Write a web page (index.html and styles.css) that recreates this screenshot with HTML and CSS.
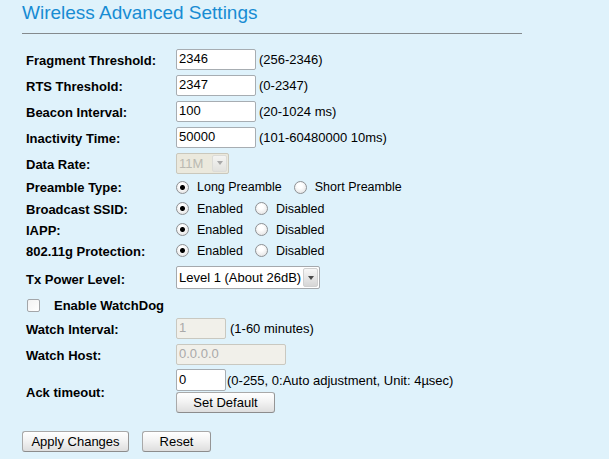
FILE: index.html
```html
<!DOCTYPE html>
<html>
<head>
<meta charset="utf-8">
<title>Wireless Advanced Settings</title>
<link rel="stylesheet" href="styles.css">
</head>
<body>
<div class="page">
  <h1 class="title">Wireless Advanced Settings</h1>
  <div class="rule"></div>
  <div class="form">
    <div class="row h26"><span class="lbl">Fragment Threshold:</span><span class="ctl"><input class="txt w80" type="text" value="2346"><span class="hint">(256-2346)</span></span></div>
    <div class="row h26"><span class="lbl">RTS Threshold:</span><span class="ctl"><input class="txt w80" type="text" value="2347"><span class="hint">(0-2347)</span></span></div>
    <div class="row h26"><span class="lbl">Beacon Interval:</span><span class="ctl"><input class="txt w80" type="text" value="100"><span class="hint">(20-1024 ms)</span></span></div>
    <div class="row h26"><span class="lbl">Inactivity Time:</span><span class="ctl"><input class="txt w80" type="text" value="50000"><span class="hint">(101-60480000 10ms)</span></span></div>
    <div class="row h26"><span class="lbl">Data Rate:</span><span class="ctl"><span class="sel sel-rate dis"><select class="sel-inner" disabled><option>11M</option></select><span class="sel-arrow"></span></span></span></div>
    <div class="row h22 radio-row"><span class="lbl">Preamble Type:</span><span class="ctl"><label class="opt"><input class="rad" type="radio" name="pre" checked>Long Preamble</label><label class="opt"><input class="rad" type="radio" name="pre">Short Preamble</label></span></div>
    <div class="row h21 radio-row"><span class="lbl">Broadcast SSID:</span><span class="ctl"><label class="opt"><input class="rad" type="radio" name="ssid" checked>Enabled</label><label class="opt"><input class="rad" type="radio" name="ssid">Disabled</label></span></div>
    <div class="row h21 radio-row"><span class="lbl">IAPP:</span><span class="ctl"><label class="opt"><input class="rad" type="radio" name="iapp" checked>Enabled</label><label class="opt"><input class="rad" type="radio" name="iapp">Disabled</label></span></div>
    <div class="row h21 radio-row"><span class="lbl">802.11g Protection:</span><span class="ctl"><label class="opt"><input class="rad" type="radio" name="prot" checked>Enabled</label><label class="opt"><input class="rad" type="radio" name="prot">Disabled</label></span></div>
    <div class="row h33"><span class="lbl">Tx Power Level:</span><span class="ctl"><span class="sel sel-tx"><select class="sel-inner"><option>Level 1 (About 26dB)</option></select><span class="sel-arrow"></span></span></span></div>
    <div class="row h22"><label class="wd"><input class="chk" type="checkbox">Enable WatchDog</label></div>
    <div class="row h24"><span class="lbl">Watch Interval:</span><span class="ctl"><input class="txt w50 off" type="text" value="1" disabled><span class="hint hint4">(1-60 minutes)</span></span></div>
    <div class="row h28"><span class="lbl">Watch Host:</span><span class="ctl"><input class="txt w110 off" type="text" value="0.0.0.0" disabled></span></div>
    <div class="row h46"><span class="lbl">Ack timeout:</span><span class="ack">
      <span class="ctl"><input class="txt w50 tall" type="text" value="0"><span class="hint hint1">(0-255, 0:Auto adjustment, Unit: 4µsec)</span></span>
      <button class="btn b-def" type="button">Set Default</button>
    </span></div>
  </div>
  <div class="actions">
    <button class="btn b-apply" type="button">Apply Changes</button>
    <button class="btn b-reset" type="button">Reset</button>
  </div>
</div>
</body>
</html>
```
FILE: styles.css
```css
html, body {
  margin: 0;
  background: #dff2fb;
}
body {
  font-family: "Liberation Sans", Arial, sans-serif;
  font-size: 13px;
  color: #000;
}
.page {
  padding-left: 22px;
}
.title {
  margin: 0;
  padding-top: 2px;
  font-size: 19px;
  line-height: 22px;
  font-weight: normal;
  color: #178cd3;
}
.rule {
  width: 500px;
  height: 1px;
  background: #848a8d;
  margin-top: 9px;
}
.form {
  margin: 12px 0 0 4px;
  display: flex;
  flex-direction: column;
}
.row {
  display: flex;
  align-items: center;
}
.h21 { height: 21px; }
.h22 { height: 22px; }
.h24 { height: 24px; }
.h26 { height: 26px; }
.h28 { height: 28px; }
.h33 { height: 33px; }
.h46 { height: 46px; }
.lbl {
  width: 150px;
  flex: none;
  font-weight: bold;
  padding-top: 3px;
  white-space: nowrap;
}
.radio-row .lbl {
  padding-top: 1px;
}
.ctl {
  display: flex;
  align-items: center;
  white-space: nowrap;
}
.txt {
  box-sizing: border-box;
  height: 21px;
  margin: 0;
  padding: 0 2px 2px 2px;
  border: 1px solid #a7adb2;
  border-radius: 2px;
  background: #fff;
  font-family: "Liberation Sans", Arial, sans-serif;
  font-size: 13px;
  color: #000;
  outline: none;
}
.w80 { width: 80px; }
.w50 { width: 50px; }
.w110 { width: 110px; }
.tall { height: 22px; }
.txt.off {
  background: #f1f0ea;
  border-color: #c9c8c0;
  color: #a9a9a9;
}
.hint {
  margin-left: 3px;
}
.hint4 { margin-left: 4px; }
.hint1 { margin-left: 1px; }

.sel {
  display: inline-flex;
  box-sizing: border-box;
  border: 1px solid #a5a9ad;
  border-radius: 2px;
  background: #fff;
}
.sel-rate { width: 53px; height: 21px; }
.sel-tx { width: 144px; height: 23px; }
.sel-inner {
  appearance: none;
  -webkit-appearance: none;
  border: 0;
  margin: 0;
  padding: 0 2px;
  background: transparent;
  font-family: "Liberation Sans", Arial, sans-serif;
  font-size: 13px;
  color: #000;
  flex: 1;
  min-width: 0;
  outline: none;
}
.sel-arrow {
  flex: none;
  width: 15px;
  margin: 1px 1px 1px 0;
  box-sizing: border-box;
  border: 1px solid #d0d0d0;
  border-radius: 2px;
  background: linear-gradient(#f7f7f7, #d6d6d6);
  display: flex;
  align-items: center;
  justify-content: center;
}
.sel-arrow::after {
  content: "";
  border-left: 3px solid transparent;
  border-right: 3px solid transparent;
  border-top: 4px solid #4a4a4a;
}
.sel.dis {
  background: #ebe9dd;
  border-color: #cac8bc;
}
.sel.dis .sel-inner {
  color: #a6a6a0;
}
.sel.dis .sel-arrow {
  background: linear-gradient(#f4f4f2, #e2e2de);
  border-color: #dcdcd8;
}
.sel.dis .sel-arrow::after {
  border-top-color: #a8a8a8;
}

.opt {
  display: inline-flex;
  align-items: center;
  font-size: 12.5px;
}
.opt + .opt {
  margin-left: 12px;
}
.rad {
  appearance: none;
  -webkit-appearance: none;
  flex: none;
  box-sizing: border-box;
  width: 13px;
  height: 13px;
  margin: 0 8px 0 0;
  border: 1px solid #8e9194;
  border-radius: 50%;
  background: radial-gradient(circle at 45% 35%, #ffffff 25%, #dcdcdc 100%);
}
.rad:checked {
  background:
    radial-gradient(circle, #000 0, #000 2px, rgba(0,0,0,0) 3px),
    radial-gradient(circle at 45% 35%, #ffffff 25%, #dcdcdc 100%);
}
.wd {
  display: flex;
  align-items: center;
  font-weight: bold;
}
.chk {
  appearance: none;
  -webkit-appearance: none;
  box-sizing: border-box;
  width: 13px;
  height: 13px;
  margin: 0 14px 0 1px;
  border: 1px solid #a3a6a9;
  border-radius: 2px;
  background: linear-gradient(135deg, #f2f2f2, #ffffff);
}
.ack {
  display: flex;
  flex-direction: column;
  gap: 1px;
}
.btn {
  box-sizing: border-box;
  height: 21px;
  margin: 0;
  padding: 0;
  border: 1px solid #a9a9a9;
  border-bottom-color: #8c8c8c;
  border-right-color: #959595;
  border-radius: 3px;
  background: linear-gradient(#ffffff 0%, #f3f3f3 45%, #dedede 100%);
  font-family: "Liberation Sans", Arial, sans-serif;
  font-size: 13px;
  color: #000;
}
.b-def { width: 99px; }
.b-apply { width: 107px; }
.b-reset { width: 69px; }
.actions {
  display: flex;
  gap: 13px;
  margin-top: 17px;
}
```
